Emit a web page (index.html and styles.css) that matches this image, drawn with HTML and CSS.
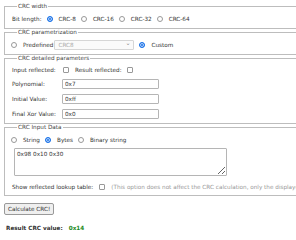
FILE: index.html
```html
<!DOCTYPE html>
<html lang="en">
<head>
  <meta charset="UTF-8">
  <title>CRC Calculator</title>
  <link rel="stylesheet" href="styles.css">
</head>
<body>

  <div class="page">
    <fieldset class="box">
      <legend>CRC width</legend>
      <div class="row">
        <span class="lbl">Bit length:</span>
        <label class="opt"><input type="radio" name="width" checked>CRC-8</label>
        <label class="opt"><input type="radio" name="width">CRC-16</label>
        <label class="opt"><input type="radio" name="width">CRC-32</label>
        <label class="opt"><input type="radio" name="width">CRC-64</label>
      </div>
    </fieldset>

    <fieldset class="box">
      <legend>CRC parametrization</legend>
      <div class="row">
        <label class="opt first"><input type="radio" name="mode">Predefined</label>
        <div class="select">CRC8<span class="chev">&#8964;</span></div>
        <label class="opt"><input type="radio" name="mode" checked>Custom</label>
      </div>
    </fieldset>

    <fieldset class="box">
      <legend>CRC detailed parameters</legend>
      <div class="params">
        <span class="lbl">Input reflected:</span>
        <div class="row flags">
          <input type="checkbox">
          <span class="lbl">Result reflected:</span>
          <input type="checkbox">
        </div>
        <span class="lbl">Polynomial:</span>
        <input class="field" type="text" value="0x7">
        <span class="lbl">Initial Value:</span>
        <input class="field" type="text" value="0xff">
        <span class="lbl">Final Xor Value:</span>
        <input class="field" type="text" value="0x0">
      </div>
    </fieldset>

    <fieldset class="box">
      <legend>CRC Input Data</legend>
      <div class="row short">
        <label class="opt first"><input type="radio" name="data">String</label>
        <label class="opt"><input type="radio" name="data" checked>Bytes</label>
        <label class="opt"><input type="radio" name="data">Binary string</label>
      </div>
      <textarea class="data">0x98 0x10 0x30</textarea>
      <div class="row short">
        <span class="lbl">Show reflected lookup table:</span>
        <input class="gap" type="checkbox">
        <span class="note">(This option does not affect the CRC calculation, only the displayed lookup table)</span>
      </div>
    </fieldset>

    <button class="calc">Calculate CRC!</button>

    <div class="result">Result CRC value: <span class="value">0x14</span></div>
  </div>

</body>
</html>
```

FILE: styles.css
```css
html {
  overflow: hidden;
}

body {
  margin: 3px 0 0 4px;
  font-family: 'DejaVu Sans', Verdana, sans-serif;
  font-size: 5.7px;
  color: #333;
  background-color: #fff;
}

.page {
  width: 420px;
}

.box {
  margin: 0;
  padding: 4px 7px 4px 7px;
  border: 1px solid #bdbdbd;
  min-width: 0;
}

legend {
  padding: 0 1px;
  margin-left: 5px;
  line-height: 7px;
  color: #444;
}

.row {
  display: flex;
  align-items: center;
  height: 10px;
  white-space: nowrap;
}

.row.short {
  height: 9px;
}

.lbl {
  white-space: nowrap;
}

.opt {
  display: flex;
  align-items: center;
}

input[type="radio"],
input[type="checkbox"] {
  appearance: none;
  margin: 0 6px 0 5px;
  width: 6px;
  height: 6px;
  border: 1px solid #999;
  background-color: #fff;
  box-sizing: border-box;
}

input[type="radio"] {
  border-radius: 50%;
}

input[type="radio"]:checked {
  border-color: #1a73e8;
  background-color: #1a73e8;
  box-shadow: inset 0 0 0 1px #cfe0fb;
}

input[type="checkbox"] {
  border-radius: 1px;
}

.opt.first input {
  margin-left: -1px;
}

.select {
  position: relative;
  width: 80px;
  height: 10px;
  box-sizing: border-box;
  margin-left: 1px;
  padding-left: 3px;
  line-height: 8px;
  border: 1px solid #d6d6d6;
  border-radius: 1px;
  background-color: #fafafa;
  color: #aaa;
}

.chev {
  position: absolute;
  right: 3px;
  top: -2px;
  font-size: 6px;
  color: #888;
}

.params {
  display: grid;
  grid-template-columns: 50px auto;
  grid-template-rows: 8px 10px 10px 10px;
  row-gap: 5px;
  align-items: center;
  justify-items: start;
}

.params .flags {
  height: 8px;
}

.params .flags input:first-child {
  margin-left: 1px;
}

.field {
  width: 97px;
  height: 10px;
  box-sizing: border-box;
  margin: 0;
  padding: 0 2px;
  border: 1px solid #b5b5b5;
  border-radius: 1px;
  font-family: inherit;
  font-size: 5.7px;
  color: #333;
}

.data {
  display: block;
  width: 213px;
  height: 28px;
  box-sizing: border-box;
  margin: 4px 0 6px 2px;
  padding: 2px;
  border: 1px solid #b5b5b5;
  border-radius: 1px;
  font-family: inherit;
  font-size: 5.7px;
  color: #333;
  resize: both;
}

.gap {
  margin-left: 6px !important;
}

.note {
  color: #999;
}

.calc {
  display: block;
  margin: 7px 0 0 0;
  height: 12px;
  padding: 0 3px;
  border: 1px solid #999;
  border-radius: 2px;
  background-color: #efefef;
  font-family: inherit;
  font-size: 5.7px;
  color: #333;
}

.result {
  margin: 10px 0 0 2px;
  font-weight: bold;
  line-height: 7px;
}

.value {
  margin-left: 4px;
  color: #1b8a1b;
}
```
